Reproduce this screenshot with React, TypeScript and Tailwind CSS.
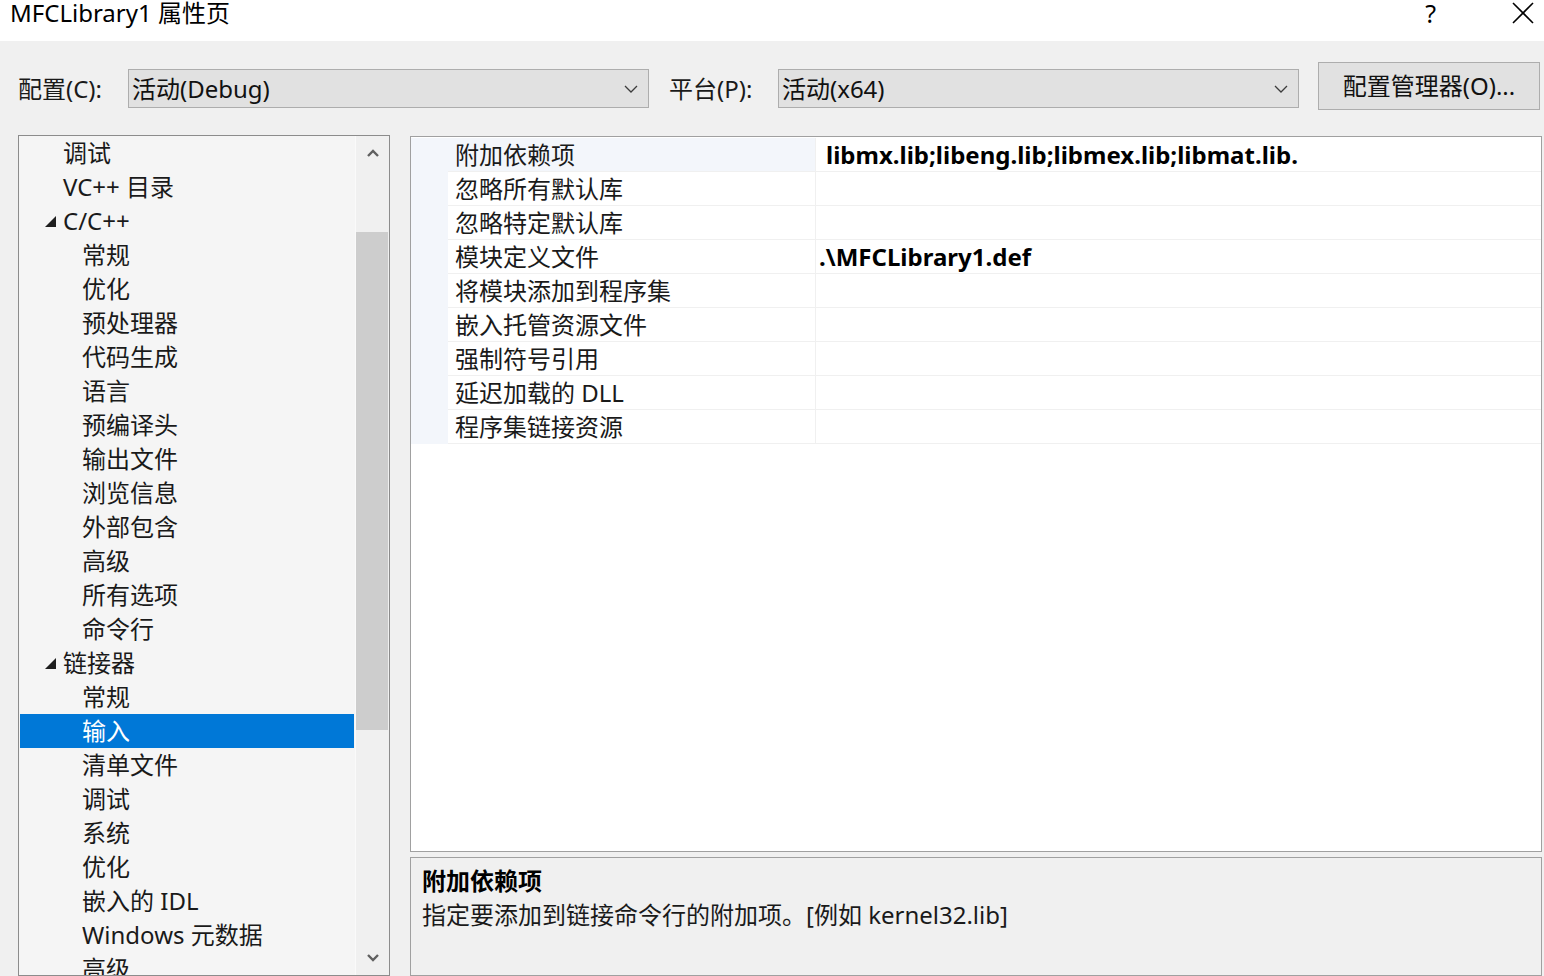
import React from "react";

const treeItems: { label: string; level: 1 | 2; expanded?: boolean; selected?: boolean }[] = [
  { label: "调试", level: 1 },
  { label: "VC++ 目录", level: 1 },
  { label: "C/C++", level: 1, expanded: true },
  { label: "常规", level: 2 },
  { label: "优化", level: 2 },
  { label: "预处理器", level: 2 },
  { label: "代码生成", level: 2 },
  { label: "语言", level: 2 },
  { label: "预编译头", level: 2 },
  { label: "输出文件", level: 2 },
  { label: "浏览信息", level: 2 },
  { label: "外部包含", level: 2 },
  { label: "高级", level: 2 },
  { label: "所有选项", level: 2 },
  { label: "命令行", level: 2 },
  { label: "链接器", level: 1, expanded: true },
  { label: "常规", level: 2 },
  { label: "输入", level: 2, selected: true },
  { label: "清单文件", level: 2 },
  { label: "调试", level: 2 },
  { label: "系统", level: 2 },
  { label: "优化", level: 2 },
  { label: "嵌入的 IDL", level: 2 },
  { label: "Windows 元数据", level: 2 },
  { label: "高级", level: 2 },
];

const props: { name: string; value?: string; valuePad?: string }[] = [
  { name: "附加依赖项", value: "libmx.lib;libeng.lib;libmex.lib;libmat.lib.", valuePad: "pl-[10px]" },
  { name: "忽略所有默认库" },
  { name: "忽略特定默认库" },
  { name: "模块定义文件", value: ".\\MFCLibrary1.def", valuePad: "pl-[3px]" },
  { name: "将模块添加到程序集" },
  { name: "嵌入托管资源文件" },
  { name: "强制符号引用" },
  { name: "延迟加载的 DLL" },
  { name: "程序集链接资源" },
];

function Chevron() {
  return (
    <svg width="14" height="8" viewBox="0 0 14 8" className="shrink-0">
      <polyline points="1,1 7,7 13,1" fill="none" stroke="#3c3c3c" strokeWidth="1.3" />
    </svg>
  );
}

function Combo({ text }: { text: string }) {
  return (
    <div className="mt-[7px] flex h-[39px] w-[521px] items-center justify-between border border-[#adadad] bg-[#e1e1e1] pl-[3px] pr-[10px]">
      <span className="text-[24px] leading-[34px] text-[#111]">{text}</span>
      <Chevron />
    </div>
  );
}

function Triangle() {
  return (
    <svg width="11" height="11" viewBox="0 0 11 11" className="absolute left-[25px] top-[12px]">
      <polygon points="11,0 11,11 0,11" fill="#1e1e1e" />
    </svg>
  );
}

export default function App() {
  return (
    <div className="h-[976px] w-[1544px] overflow-hidden bg-[#f0f0f0] font-['Noto_Sans','Noto_Sans_CJK_SC',sans-serif] text-[#1a1a1a]">
      {/* title bar */}
      <div className="flex h-[41px] items-start justify-between bg-white">
        <span className="ml-[10px] text-[24px] leading-[26px] text-black">MFCLibrary1 属性页</span>
        <div className="flex items-start">
          <span className="text-[25px] leading-[26px] text-black">?</span>
          <svg width="22" height="22" viewBox="0 0 22 22" className="ml-[76px] mr-[10px] mt-[2px]">
            <line x1="1" y1="1" x2="21" y2="21" stroke="#000" strokeWidth="1.6" />
            <line x1="21" y1="1" x2="1" y2="21" stroke="#000" strokeWidth="1.6" />
          </svg>
        </div>
      </div>

      {/* configuration row */}
      <div className="flex items-start pl-[18px] pt-[21px]">
        <span className="mt-[10px] w-[110px] text-[24px] leading-[34px]">配置(C):</span>
        <Combo text="活动(Debug)" />
        <span className="ml-[20px] mt-[10px] w-[109px] text-[24px] leading-[34px]">平台(P):</span>
        <Combo text="活动(x64)" />
        <button className="ml-[19px] flex h-[48px] w-[222px] items-center justify-center border border-[#adadad] bg-[#e1e1e1] text-[24px] leading-[34px] text-[#111]">
          配置管理器(O)...
        </button>
      </div>

      {/* main */}
      <div className="mt-[25px] flex gap-[20px] pl-[18px] pr-[2px]">
        {/* tree */}
        <div className="flex h-[841px] w-[372px] border border-[#8c8c8c] bg-[#f5f5f5]">
          <div className="flex-1 overflow-hidden px-[1px]">
            {treeItems.map((item, i) => (
              <div
                key={i}
                className={
                  "relative h-[34px] text-[24px] leading-[34px] " +
                  (item.selected ? "bg-[#0078d7] text-white" : "")
                }
              >
                {item.expanded && <Triangle />}
                <span className={item.level === 1 ? "ml-[43px]" : "ml-[62px]"}>{item.label}</span>
              </div>
            ))}
          </div>
          <div className="flex w-[34px] flex-col border-l border-[#fafafa] bg-[#f0f0f0]">
            <div className="flex h-[34px] items-center justify-center">
              <svg width="12" height="8" viewBox="0 0 12 8">
                <polyline points="1,7 6,2 11,7" fill="none" stroke="#606060" strokeWidth="2.4" />
              </svg>
            </div>
            <div className="mt-[62px] h-[498px] w-[32px] bg-[#cdcdcd]" />
            <div className="flex-1" />
            <div className="flex h-[34px] items-center justify-center">
              <svg width="12" height="8" viewBox="0 0 12 8">
                <polyline points="1,1 6,6 11,1" fill="none" stroke="#606060" strokeWidth="2.4" />
              </svg>
            </div>
          </div>
        </div>

        {/* grid + description */}
        <div className="mt-[1px] flex w-[1132px] flex-col">
          <div className="h-[716px] border border-[#a0a0a0] bg-white pt-[1px]">
            {props.map((p, i) => (
              <div key={i} className="flex h-[34px]">
                <div className="w-[37px] bg-[#f3f6fb]" />
                <div
                  className={
                    "w-[367px] border-b border-[#f0f0f0] pl-[7px] text-[24px] leading-[33px] " +
                    (i === 0 ? "bg-[#f3f6fb]" : "")
                  }
                >
                  {p.name}
                </div>
                <div
                  className={
                    "flex-1 border-b border-l border-[#f0f0f0] text-[24px] font-bold leading-[33px] text-black " +
                    (p.valuePad ?? "")
                  }
                >
                  {p.value}
                </div>
              </div>
            ))}
          </div>
          <div className="mt-[5px] h-[119px] border border-[#a0a0a0] bg-[#f0f0f0] pl-[11px] pt-[6px]">
            <div className="text-[24px] font-bold leading-[34px] text-black">附加依赖项</div>
            <div className="text-[24px] leading-[34px]">指定要添加到链接命令行的附加项。[例如 kernel32.lib]</div>
          </div>
        </div>
      </div>
    </div>
  );
}
